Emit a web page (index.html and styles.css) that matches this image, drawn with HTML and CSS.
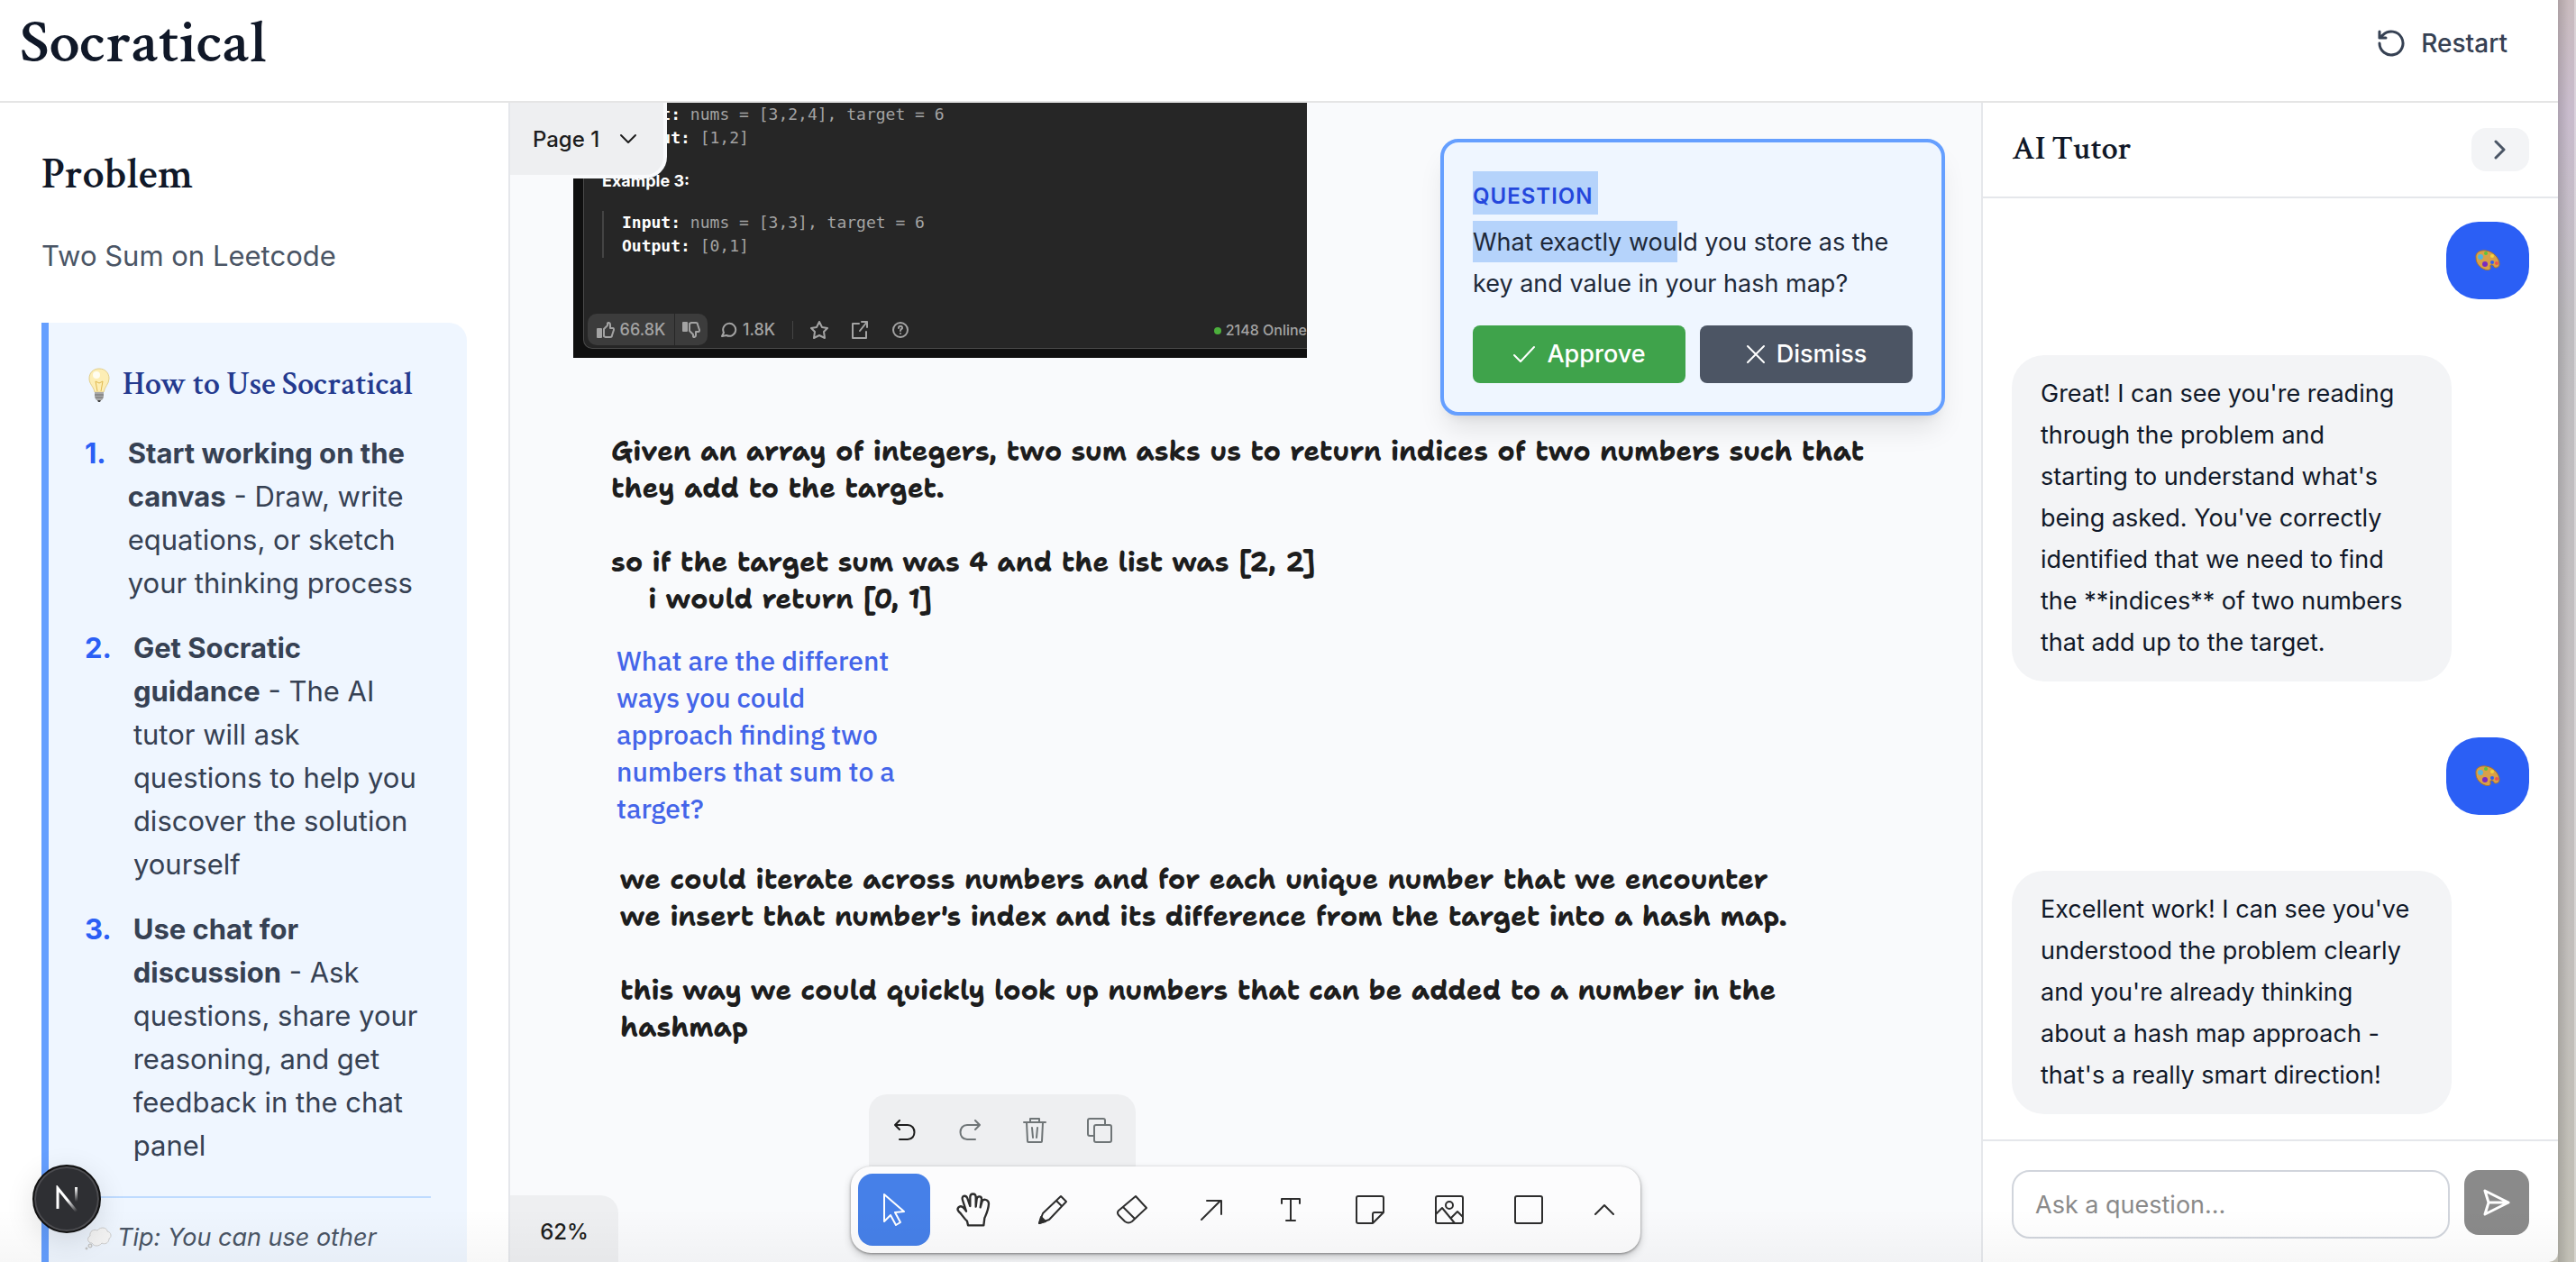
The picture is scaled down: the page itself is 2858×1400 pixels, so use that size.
FILE: index.html
```html
<!DOCTYPE html>
<html lang="en">
<head>
    <meta charset="UTF-8">
    <meta name="viewport" content="width=device-width, initial-scale=1.0">
    <title>Socratical</title>
    <link rel="stylesheet" href="styles.css">
</head>
<body>
    <div class="app">

        <!-- Header -->
        <header class="header">
            <h1>Socratical</h1>
            <button type="button" class="restart">
                <svg class="icon" width="30" height="30" viewBox="0 0 30 30"><path d="M2 15a13 13 0 1 0 4-9.400L2 9M2 2v7h7" /></svg>
                Restart
            </button>
        </header>

        <!-- Problem panel -->
        <aside class="problem">
            <h2>Problem</h2>
            <p class="problem-name">Two Sum on Leetcode</p>

            <div class="howto">
                <h3>
                    <svg width="32" height="38" viewBox="0 0 32 38" aria-hidden="true">
                        <path d="M16 1C9 1 5 6 5 12c0 6 5 9 6 15h10c1-6 6-9 6-15C27 6 23 1 16 1z" fill="#fdeeb5" stroke="#e3cf8b" />
                        <path d="M14 26l-2-11 4 2 4-2-2 11" fill="none" stroke="#e0b84f" />
                        <ellipse cx="13" cy="8" rx="4" ry="4" fill="#fffdf0" />
                        <path d="M11 27h10v6l-2 3h-6l-2-3z" fill="#a9a9a9" />
                        <path d="M11 30h10M12 33h8" stroke="#6d6d6d" />
                        <path d="M14 36h4l-1 2h-2z" fill="#444" />
                    </svg>
                    How to Use Socratical
                </h3>
                <ol class="steps">
                    <li><span class="num">1.</span><p><strong>Start working on the canvas</strong> - Draw, write equations, or sketch your thinking process</p></li>
                    <li><span class="num">2.</span><p><strong>Get Socratic guidance</strong> - The AI tutor will ask questions to help you discover the solution yourself</p></li>
                    <li><span class="num">3.</span><p><strong>Use chat for discussion</strong> - Ask questions, share your reasoning, and get feedback in the chat panel</p></li>
                </ol>
                <p class="tip">
                    <svg width="30" height="28" viewBox="0 0 30 28" aria-hidden="true">
                        <path d="M8 20c-5 0-6-6-2-8-1-5 4-8 8-6 4-5 11-3 11 1 5 1 5 7 2 8 0 5-5 7-8 5-3 4-9 4-11 0z" fill="#f6f6f6" stroke="#cfcfcf" />
                        <circle cx="6" cy="23" r="2" fill="#eee" stroke="#bbb" />
                        <circle cx="2" cy="26" r="1" fill="#ddd" stroke="#bbb" />
                    </svg>
                    Tip: You can use other
                </p>
            </div>
        </aside>

        <!-- Drawing canvas -->
        <main class="canvas">
            <figure class="shot">
                <div class="shot-card">
                    <div class="example">
                        <p><b>Input:</b> nums = [3,2,4], target = 6</p>
                        <p><b>Output:</b> [1,2]</p>
                    </div>
                    <h4>Example 3:</h4>
                    <div class="example">
                        <p><b>Input:</b> nums = [3,3], target = 6</p>
                        <p><b>Output:</b> [0,1]</p>
                    </div>
                    <div class="shot-bar">
                        <span class="pill pill-left">
                            <svg class="icon" width="20" height="18" viewBox="0 0 20 18"><path d="M1 8h4v9H1z" fill="currentColor" /><path d="M8 16V8l4-4V2c0-2 3-1 3 1v4h3c1 0 1 1 1 2l-2 6c0 1-1 2-2 2H10z" /></svg>
                            66.8K
                        </span>
                        <span class="pill pill-right">
                            <svg class="icon" width="20" height="18" viewBox="0 0 20 18"><path d="M1 1h4v9H1z" fill="currentColor" /><path d="M8 2v8l4 4v2c0 2 3 1 3-1v-4h3c1 0 1-1 1-2l-2-6c0-1-1-2-2-2h-5z" /></svg>
                        </span>
                        <span class="comments">
                            <svg class="icon" width="18" height="18" viewBox="0 0 18 18"><path d="M1 16l2-4a7 7 0 1 1 3 3z" /></svg>
                            1.8K
                        </span>
                        <span class="rule"></span>
                        <svg class="icon" width="20" height="20" viewBox="0 0 20 20"><path d="M10 1l3 6 6 1-4 4 1 7-6-3-6 3 1-7-4-4 6-1z" /></svg>
                        <svg class="icon" width="20" height="20" viewBox="0 0 20 20"><path d="M9 3H2v16h15v-7M12 1h6v6M18 1l-8 10" /></svg>
                        <svg class="icon" width="20" height="20" viewBox="0 0 20 20"><circle cx="10" cy="10" r="8" /><path d="M8 8c0-3 4-3 4 0 0 1-2 1-2 3M10 14v0" /></svg>
                        <span class="online">2148 Online</span>
                    </div>
                </div>
            </figure>

            <p class="note note-intro">Given an array of integers, two sum asks us to return indices of two numbers such that
they add to the target.

so if the target sum was 4 and the list was [2, 2]
    i would return [0, 1]</p>
            <p class="note note-tutor">What are the different
ways you could
approach finding two
numbers that sum to a
target?</p>
            <p class="note note-answer">we could iterate across numbers and for each unique number that we encounter
we insert that number's index and its difference from the target into a hash map.

this way we could quickly look up numbers that can be added to a number in the
hashmap</p>

            <button type="button" class="page-menu">
                Page 1
                <svg class="icon" width="20" height="12" viewBox="0 0 20 12"><path d="M2 2l8 8 8-8" /></svg>
            </button>

            <section class="question">
                <h5><mark>Question</mark></h5>
                <p><mark>What exactly wou</mark>ld you store as the key and value in your hash map?</p>
                <div class="question-actions">
                    <button type="button" class="approve">
                        <svg class="icon" width="26" height="20" viewBox="0 0 26 20"><path d="M2 11l7 7L24 2" /></svg>
                        Approve
                    </button>
                    <button type="button" class="dismiss">
                        <svg class="icon" width="22" height="22" viewBox="0 0 22 22"><path d="M2 2l18 18M20 2L2 20" /></svg>
                        Dismiss
                    </button>
                </div>
            </section>

            <button type="button" class="zoom-menu">62%</button>

            <div class="dock">
                <div class="actions">
                    <button type="button" aria-label="Undo"><svg class="icon" width="24" height="24" viewBox="0 0 24 24"><path d="M6 1L1 6l5 5M1 6h14c10 0 10 16 0 16H6" /></svg></button>
                    <button type="button" aria-label="Redo" disabled><svg class="icon" width="24" height="24" viewBox="0 0 24 24"><path d="M18 1l5 5-5 5M23 6H9C-1 6-1 22 9 22h9" /></svg></button>
                    <button type="button" aria-label="Delete" disabled><svg class="icon" width="26" height="30" viewBox="0 0 26 30"><path d="M1 6h24M8 6V2h10v4M4 6l1 21q0 1 1 1h14q1 0 1-1l1-21M10 12l1 11M16 12l-1 11" /></svg></button>
                    <button type="button" aria-label="Duplicate" disabled><svg class="icon" width="28" height="28" viewBox="0 0 28 28"><rect x="8" y="8" width="19" height="19" rx="2" /><path d="M8 20H3q-2 0-2-2V3q0-2 2-2h15q2 0 2 2v5" /></svg></button>
                </div>
                <div class="toolbar">
                    <button type="button" class="active" aria-label="Select"><svg class="icon" width="26" height="38" viewBox="0 0 26 38"><path d="M2 2v30l7-7 6 11 5-3-6-11 10-1z" /></svg></button>
                    <button type="button" aria-label="Hand"><svg class="icon" width="38" height="38" viewBox="-3 -3 114 114"><path stroke-width="7" d="M36 106l-3-14C22 83 15 68 5 60-4 50 8 38 18 45c6 4 9 9 12 14L18 22C13 8 28 3 34 16l9 26V12C43-2 62-2 62 12v32l3-26C67 7 82 8 81 20l-4 26 6-20c4-10 22-6 22 8-1 20-8 34-14 48l-3 24z" /></svg></button>
                    <button type="button" aria-label="Draw"><svg class="icon" width="34" height="34" viewBox="0 0 34 34"><path d="M26 2l6 6-19 20-11 4 4-11zM21 7l6 6" /><path d="M2 32l2-7 5 5z" fill="currentColor" /></svg></button>
                    <button type="button" aria-label="Eraser"><svg class="icon" width="34" height="34" viewBox="0 0 34 34"><path d="M21 2l12 13-16 15q-4 3-8 0l-7-7q-2-3 0-5zM7 14l13 13" /></svg></button>
                    <button type="button" aria-label="Arrow"><svg class="icon" width="26" height="26" viewBox="0 0 26 26"><path d="M2 24L23 3M8 3h16v15" /></svg></button>
                    <button type="button" aria-label="Text"><svg class="icon" width="26" height="30" viewBox="0 0 26 30"><path d="M3 8V3h20v5M13 3v24M8 27h10" /></svg></button>
                    <button type="button" aria-label="Note"><svg class="icon" width="34" height="34" viewBox="0 0 34 34"><path d="M20 32H4q-2 0-2-2V4q0-2 2-2h26q2 0 2 2v16zM20 32V22q0-2 2-2h10" /></svg></button>
                    <button type="button" aria-label="Media"><svg class="icon" width="34" height="34" viewBox="0 0 34 34"><rect x="2" y="2" width="30" height="30" rx="2" /><circle cx="17" cy="12" r="4" /><path d="M2 22l7-7 14 17M19 26l7-7 6 6" /></svg></button>
                    <button type="button" aria-label="Rectangle"><svg class="icon" width="34" height="34" viewBox="0 0 34 34"><rect x="2" y="2" width="30" height="30" rx="2" /></svg></button>
                    <button type="button" class="more" aria-label="More"><svg class="icon" width="24" height="14" viewBox="0 0 24 14"><path d="M2 12L12 2l10 10" /></svg></button>
                </div>
            </div>
        </main>

        <!-- AI tutor chat -->
        <aside class="chat">
            <div class="chat-header">
                <h2>AI Tutor</h2>
                <button type="button" aria-label="Collapse chat"><svg class="icon" width="14" height="22" viewBox="0 0 14 22"><path d="M2 2l9 9-9 9" /></svg></button>
            </div>
            <div class="messages">
                <div class="message user">
                    <svg width="28" height="24" viewBox="0 0 28 24" role="img" aria-label="Palette">
                        <path d="M1 9C0 3 6 0 12 1c9 1 15 9 15 15 0 4-5 5-6 3-1-3-5-3-4 0 1 4-3 4-6 3C5 20 1 15 1 9z" fill="#d9a047" stroke="#a8722a" />
                        <circle cx="19" cy="14" r="2" fill="#2b5ff5" />
                        <circle cx="6" cy="8" r="3" fill="#55b4e0" /><circle cx="12" cy="4" r="2" fill="#5cc43c" />
                        <circle cx="19" cy="7" r="2" fill="#f3d33d" /><circle cx="24" cy="15" r="2" fill="#ef5350" /><circle cx="11" cy="16" r="3" fill="#7a2bc0" />
                    </svg>
                </div>
                <div class="message tutor">Great! I can see you're reading through the problem and starting to understand what's being asked. You've correctly identified that we need to find the **indices** of two numbers that add up to the target.</div>
                <div class="message user">
                    <svg width="28" height="24" viewBox="0 0 28 24" role="img" aria-label="Palette">
                        <path d="M1 9C0 3 6 0 12 1c9 1 15 9 15 15 0 4-5 5-6 3-1-3-5-3-4 0 1 4-3 4-6 3C5 20 1 15 1 9z" fill="#d9a047" stroke="#a8722a" />
                        <circle cx="19" cy="14" r="2" fill="#2b5ff5" />
                        <circle cx="6" cy="8" r="3" fill="#55b4e0" /><circle cx="12" cy="4" r="2" fill="#5cc43c" />
                        <circle cx="19" cy="7" r="2" fill="#f3d33d" /><circle cx="24" cy="15" r="2" fill="#ef5350" /><circle cx="11" cy="16" r="3" fill="#7a2bc0" />
                    </svg>
                </div>
                <div class="message tutor">Excellent work! I can see you've understood the problem clearly and you're already thinking about a hash map approach - that's a really smart direction!</div>
            </div>
            <form class="ask">
                <input type="text" placeholder="Ask a question..." aria-label="Ask a question">
                <button type="submit" aria-label="Send"><svg class="icon" width="30" height="30" viewBox="0 0 30 30"><path d="M2 2l26 13L2 28l4-13zM6 15h22" /></svg></button>
            </form>
        </aside>
    </div>

    <!-- Dev tools badge -->
    <button type="button" class="dev-badge" aria-label="Dev tools">
        <svg width="28" height="30" viewBox="0 0 28 30">
            <defs>
                <linearGradient id="fadeDiag" gradientUnits="userSpaceOnUse" x1="15" y1="16" x2="25" y2="29"><stop stop-color="#fff" /><stop offset="1" stop-color="#fff" stop-opacity="0" /></linearGradient>
                <linearGradient id="fadeDown" gradientUnits="userSpaceOnUse" x1="24" y1="2" x2="24" y2="18"><stop stop-color="#fff" /><stop offset="1" stop-color="#fff" stop-opacity="0" /></linearGradient>
            </defs>
            <path d="M4 26V3l21 26" fill="none" stroke="url(#fadeDiag)" stroke-width="3" />
            <path d="M23 2h3v16h-3z" fill="url(#fadeDown)" />
        </svg>
    </button>
</body>
</html>
```
FILE: styles.css
```css
* {
    box-sizing: border-box;
}

/* Desktop that shows beside the window */
body {
    margin: 0;
    padding-right: 20px;
    height: 100vh;
    overflow: hidden;
    font-family: Inter, "Liberation Sans", sans-serif;
    font-size: 27px;
    color: #101828;
    background:
        linear-gradient(to left, #ffffff55 2px, transparent 2px, transparent 8px, #00000022 20px) right / 20px 100% no-repeat,
        linear-gradient(#c9bbbe, #c9bccd 9%, #bfbdc0 26%, #c3bfc0 60%, #c1bfb5);
}

h1, h2, h3, h4, h5, p, ol, figure {
    margin: 0;
    padding: 0;
}

h1, h2, h3 {
    font-family: "Crimson Text", "Crimson Pro", "Liberation Serif", serif;
    font-weight: 600;
}

button {
    display: flex;
    align-items: center;
    justify-content: center;
    padding: 0;
    border: none;
    background: none;
    color: inherit;
    font: inherit;
    cursor: pointer;
}

svg {
    flex: none;
}

.icon {
    fill: none;
    stroke: currentColor;
    stroke-width: 2;
    stroke-linecap: round;
    stroke-linejoin: round;
}

.app {
    position: relative;
    display: grid;
    grid-template: 114px minmax(0, 1fr) / 566px minmax(0, 1fr) 640px;
    height: 100vh;
    background: #fff;
    border-bottom-right-radius: 10px;
    overflow: hidden;
}

/* Soft shade along the bottom edge */
.app::after {
    content: "";
    position: absolute;
    right: 0;
    bottom: 0;
    left: 0;
    height: 60px;
    background: linear-gradient(transparent, rgba(0, 0, 0, 0.03));
    pointer-events: none;
}

/* Header */
.header {
    grid-column: 1 / -1;
    display: flex;
    align-items: center;
    justify-content: space-between;
    padding: 0 56px 16px 22px;
    border-bottom: 2px solid #e5e5e5;
}

.header h1 {
    font-size: 68px;
    line-height: 72px;
}

.restart {
    gap: 18px;
    font-size: 28px;
    font-weight: 500;
    color: #364153;
}

.restart .icon {
    stroke-width: 3;
}

/* Problem panel */
.problem {
    padding: 50px 46px 0;
    border-right: 2px solid #e5e7eb;
    overflow: hidden;
    font-size: 31px;
    line-height: 48px;
}

.problem h2 {
    font-size: 48px;
    line-height: 60px;
}

.problem-name {
    margin: 36px 0 50px;
    color: #4a5565;
}

.howto {
    padding: 44px 40px 60px;
    border-left: 8px solid #659fff;
    border-radius: 0 20px 20px 0;
    background: #eff6ff;
    color: #364153;
}

.howto h3 {
    display: flex;
    align-items: center;
    gap: 10px;
    margin-bottom: 27px;
    font-size: 36px;
    line-height: 50px;
    color: #243a8f;
    white-space: nowrap;
}

.steps {
    display: flex;
    flex-direction: column;
    gap: 24px;
    list-style: none;
}

.steps li {
    display: flex;
    gap: 24px;
}

.num {
    font-weight: 700;
    color: #2b5ff5;
}

.steps strong {
    font-weight: 700;
}

.tip {
    display: flex;
    align-items: center;
    gap: 6px;
    margin-top: 32px;
    padding-top: 20px;
    border-top: 2px solid #bedbff;
    font-size: 27px;
    font-style: italic;
    color: #4a5565;
    white-space: nowrap;
}

/* Canvas */
.canvas {
    position: relative;
    overflow: hidden;
    background: #f9fafc;
    color: #1d1d1d;
}

.note {
    position: absolute;
    font-family: "Shantell Sans", Lato, sans-serif;
    font-size: 30px;
    font-weight: 700;
    line-height: 41px;
    white-space: pre;
}

.note-intro {
    top: 366px;
    left: 112px;
}

.note-tutor {
    top: 598px;
    left: 118px;
    font-family: "IBM Plex Sans", "Open Sans", sans-serif;
    font-weight: 500;
    color: #4465e9;
}

.note-answer {
    top: 841px;
    left: 122px;
}

/* Pasted picture of the problem statement */
.shot {
    position: absolute;
    top: 0;
    left: 70px;
    width: 814px;
    height: 283px;
    padding: 0 0 10px 11px;
    overflow: hidden;
    background: #0f0f0f;
    color: #a3a3a3;
}

.shot-card {
    height: 100%;
    padding-left: 20px;
    border: solid #4a4a4a;
    border-width: 0 0 1px 1px;
    border-bottom-left-radius: 10px;
    background: #262626;
}

.shot h4 {
    margin: 22px 0 20px;
    font-size: 18px;
    font-weight: 700;
    line-height: 26px;
    color: #fff;
}

.example {
    padding-left: 20px;
    border-left: 2px solid #444;
    font-family: Menlo, "DejaVu Sans Mono", monospace;
    font-size: 18px;
    line-height: 26px;
}

.example b {
    color: #fff;
}

.shot-bar {
    display: flex;
    align-items: center;
    gap: 25px;
    margin: 62px 0 0 -16px;
    font-size: 18px;
    font-weight: 500;
    white-space: nowrap;
}

.pill {
    display: flex;
    align-items: center;
    justify-content: center;
    gap: 6px;
    width: 36px;
    height: 35px;
    background: #3c3c3c;
}

.pill-left {
    width: 96px;
    margin-right: -24px;
    border-radius: 10px 0 0 10px;
}

.pill-right {
    margin-right: -10px;
    border-radius: 0 10px 10px 0;
}

.comments {
    display: flex;
    align-items: center;
    gap: 6px;
}

.rule {
    width: 1px;
    height: 20px;
    margin: 0 -6px;
    background: #444;
}

.online {
    margin-left: auto;
    font-size: 16px;
}

.online::before {
    content: "";
    display: inline-block;
    width: 8px;
    height: 8px;
    margin-right: 5px;
    border-radius: 50%;
    background: #4caf3c;
    vertical-align: 1px;
}

.page-menu,
.zoom-menu {
    position: absolute;
    left: 0;
    height: 80px;
    background: #eeeff1;
    font-size: 24px;
    font-weight: 500;
}

.page-menu {
    top: 0;
    gap: 22px;
    width: 170px;
    padding-right: 4px;
    border-radius: 0 0 20px 0;
    box-shadow: 0 0 0 4px #f9fafc;
}

.zoom-menu {
    bottom: -6px;
    width: 120px;
    border-radius: 0 20px 0 0;
}

/* Question card */
.question {
    position: absolute;
    top: 40px;
    right: 40px;
    width: 560px;
    padding: 32px;
    border: 4px solid #659fff;
    border-radius: 20px;
    background: #eff6ff;
    box-shadow: 0 20px 30px -6px rgba(0, 0, 0, 0.1), 0 8px 12px -8px rgba(0, 0, 0, 0.1);
    color: #1e2939;
    line-height: 46px;
}

.question h5 {
    height: 48px;
    margin-bottom: 8px;
    font-size: 24px;
    font-weight: 600;
    line-height: 40px;
    letter-spacing: 1px;
    text-transform: uppercase;
}

.question mark {
    padding: 7px 0 6px;
    background: #b5d3fb;
    color: inherit;
}

.question h5 mark {
    display: inline-block;
    padding: 8px 5px 0 0;
    color: #2447dc;
}

.question-actions {
    display: grid;
    grid-template-columns: 1fr 1fr;
    gap: 16px;
    margin-top: 23px;
}

.question-actions button {
    gap: 12px;
    height: 64px;
    border-radius: 8px;
    background: #4c5564;
    font-weight: 500;
    color: #fff;
}

.question-actions .approve {
    background: #3fa34b;
}

/* Toolbar */
.dock {
    position: absolute;
    bottom: 10px;
    left: 50%;
    transform: translateX(-50%);
}

.actions {
    display: flex;
    width: 296px;
    height: 80px;
    margin-left: 20px;
    padding: 0 4px;
    border-radius: 20px 20px 0 0;
    background: #eeeff1;
}

.actions button {
    width: 72px;
}

.actions button:disabled {
    color: #6f7577;
}

.toolbar {
    position: relative;
    display: flex;
    gap: 8px;
    padding: 8px 4px 8px 8px;
    border-radius: 22px;
    background: #fcfcfd;
    box-shadow: 0 1px 3px rgba(0, 0, 0, 0.4), 0 4px 10px rgba(0, 0, 0, 0.2);
}

.toolbar button {
    width: 80px;
    height: 80px;
    border-radius: 16px;
    color: #2d2d2d;
}

.toolbar .icon {
    stroke-width: 2;
}

.toolbar .more {
    width: 72px;
}

.toolbar .active {
    background: #4680e8;
    color: #fff;
}

/* Chat */
.chat {
    display: flex;
    flex-direction: column;
    border-left: 2px solid #e5e7eb;
    min-height: 0;
}

.chat-header {
    display: flex;
    align-items: center;
    justify-content: space-between;
    padding: 28px 32px;
    border-bottom: 2px solid #e5e7eb;
}

.chat-header h2 {
    font-size: 36px;
    line-height: 48px;
}

.chat-header button {
    width: 64px;
    height: 48px;
    border-radius: 16px;
    background: #f3f4f6;
    color: #4a5565;
}

.chat-header .icon {
    stroke-width: 3;
}

.messages {
    flex: 1;
    display: flex;
    flex-direction: column;
    gap: 62px;
    min-height: 0;
    padding: 26px 32px 0;
    overflow: hidden;
}

.message {
    flex: none;
    align-self: flex-start;
    max-width: 85%;
    padding: 20px 32px;
    border-radius: 36px;
    background: #f3f4f6;
    line-height: 46px;
}

.tutor {
    padding-right: 40px;
}

.user {
    display: flex;
    align-items: center;
    align-self: flex-end;
    height: 86px;
    background: #2b5ff5;
}

.ask {
    display: flex;
    align-items: flex-start;
    gap: 16px;
    padding: 32px 32px 26px;
    border-top: 2px solid #e5e7eb;
}

.ask input {
    flex: 1;
    min-width: 0;
    height: 76px;
    padding: 0 24px;
    border: 2px solid #d1d5dc;
    border-radius: 20px;
    font: inherit;
}

.ask input::placeholder {
    color: #8a8a8a;
}

.ask button {
    width: 72px;
    height: 72px;
    border-radius: 16px;
    background: #8a8a8a;
    color: #fff;
}

.ask .icon {
    stroke-width: 3;
}

/* Dev tools badge */
.dev-badge {
    position: absolute;
    bottom: 32px;
    left: 36px;
    width: 76px;
    height: 76px;
    border: 2px solid #111;
    border-radius: 50%;
    background: #2e2f33;
    box-shadow: inset 0 0 0 2px #4c4c50, 0 8px 32px rgba(0, 0, 0, 0.12);
}
```
